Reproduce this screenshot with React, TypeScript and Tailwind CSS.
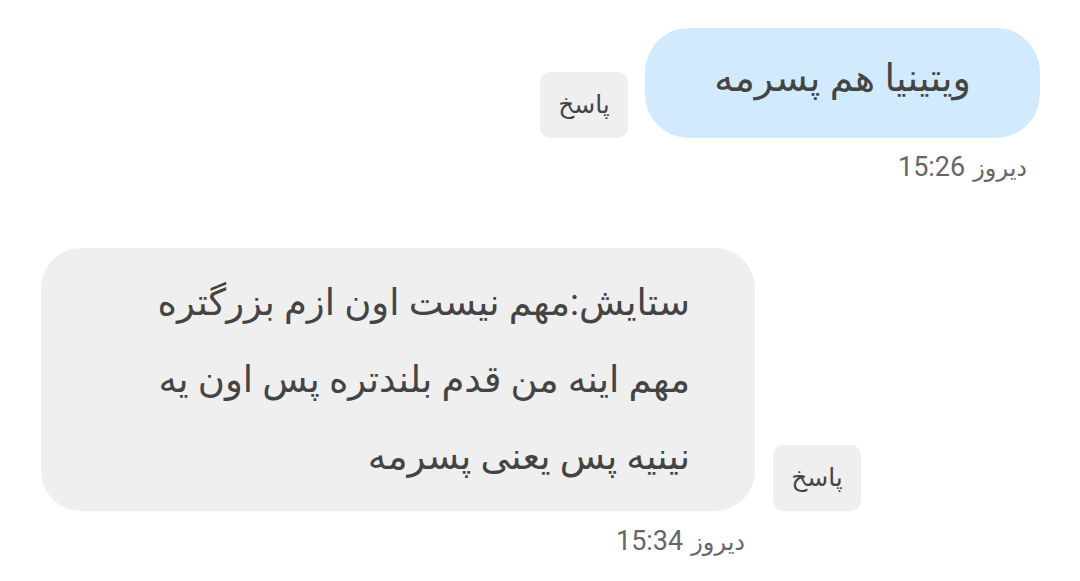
const FONT = 'font-["Roboto","DejaVu_Sans",sans-serif]';

function ReplyButton() {
  return (
    <button
      dir="rtl"
      className="flex h-[66px] w-[88px] shrink-0 items-center justify-center rounded-[10px] bg-[#efefef] text-[25px] text-[#444]"
    >
      پاسخ
    </button>
  );
}

function Timestamp({ time }: { time: string }) {
  return (
    <div dir="rtl" className="flex items-baseline gap-[8px] leading-[30px] text-[#666]">
      <span className="text-[24px]">دیروز</span>
      <span className="text-[27px]">{time}</span>
    </div>
  );
}

export default function App() {
  return (
    <div dir="ltr" className={`${FONT} h-[581px] w-[1080px] overflow-hidden bg-white`}>
      {/* outgoing */}
      <div className="flex flex-col items-end pr-[40px] pt-[28px]">
        <div className="flex items-end gap-[17px]">
          <ReplyButton />
          <div
            dir="rtl"
            className="flex h-[110px] w-[395px] items-center justify-center rounded-[44px] bg-[#d1eafd] pb-[9px] text-[38px] text-[#444]"
          >
            ویتینیا هم پسرمه
          </div>
        </div>
        <div className="pr-[13px] pt-[14px]">
          <Timestamp time="15:26" />
        </div>
      </div>

      {/* incoming */}
      <div className="flex flex-col items-start pl-[41px] pt-[65px]">
        <div className="flex items-end gap-[18px]">
          <div
            dir="rtl"
            className="w-[714px] rounded-[40px] bg-[#efefef] py-[16px] pr-[65px] text-[37px] leading-[77px] text-[#444]"
          >
            ستایش:مهم نیست اون ازم بزرگتره
            <br />
            مهم اینه من قدم بلندتره پس اون یه
            <br />
            نینیه پس یعنی پسرمه
          </div>
          <ReplyButton />
        </div>
        <div className="flex w-[714px] justify-end pr-[10px] pt-[15px]">
          <Timestamp time="15:34" />
        </div>
      </div>
    </div>
  );
}
